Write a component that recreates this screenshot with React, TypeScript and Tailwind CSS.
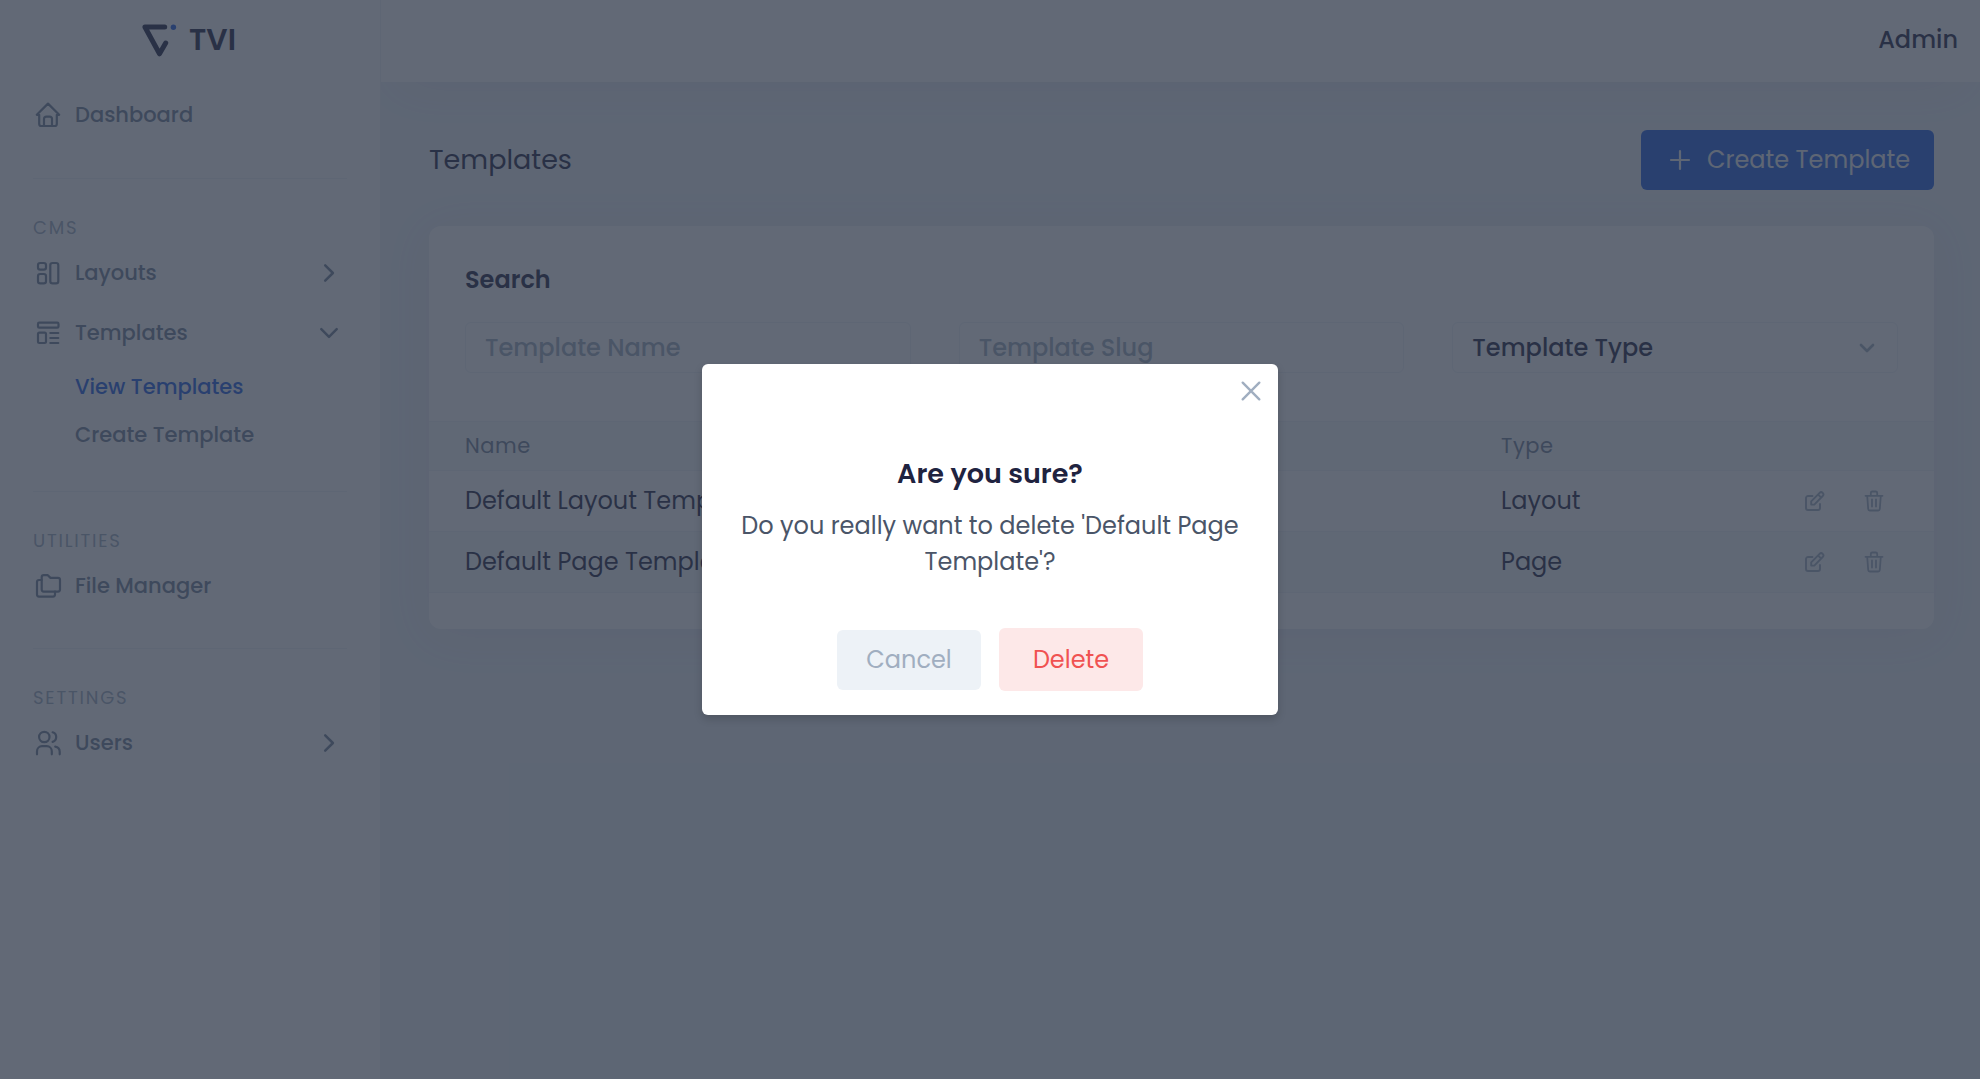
import type { ReactNode } from "react";

function NavIcon({ children }: { children: ReactNode }) {
  return (
    <svg
      viewBox="0 0 30 30"
      className="h-[30px] w-[30px] shrink-0"
      fill="none"
      stroke="currentColor"
      strokeWidth="2.2"
      strokeLinecap="round"
      strokeLinejoin="round"
    >
      {children}
    </svg>
  );
}

const HomeIcon = () => (
  <NavIcon>
    <path d="M6.2 14.8H3.8L15 3.6l11.2 11.2h-2.4M6.2 14.8V24a2 2 0 0 0 2 2h13.6a2 2 0 0 0 2-2V14.8" />
    <path d="M11 26v-7a2.4 2.4 0 0 1 2.4-2.4h3.2a2.4 2.4 0 0 1 2.4 2.4v7" />
  </NavIcon>
);

const LayoutsIcon = () => (
  <NavIcon>
    <rect x="5" y="5" width="8" height="6.6" rx="2.2" />
    <rect x="5" y="16" width="8" height="9.4" rx="2.2" />
    <rect x="17.3" y="5" width="8" height="20.4" rx="2.2" />
  </NavIcon>
);

const TemplatesIcon = () => (
  <NavIcon>
    <rect x="5" y="4.7" width="20.5" height="5" rx="1.2" />
    <rect x="5" y="14.7" width="8" height="10.3" rx="1.4" />
    <path d="M17.3 15h8M17.3 20h8M17.3 25h8" />
  </NavIcon>
);

const FoldersIcon = () => (
  <NavIcon>
    <path d="M8.7 6.2a2 2 0 0 1 2-2h4.1l2.7 2.7h7.5a2 2 0 0 1 2 2v9.7a2 2 0 0 1-2 2H10.7a2 2 0 0 1-2-2z" />
    <path d="M8.7 9H6a2 2 0 0 0-2 2v12.6a2 2 0 0 0 2 2h14a2 2 0 0 0 2-2v-3" />
  </NavIcon>
);

const UsersIcon = () => (
  <NavIcon>
    <circle cx="11.3" cy="9" r="5.2" />
    <path d="M4 26.3v-3.1a5 5 0 0 1 5-5h4.8a5 5 0 0 1 5 5v3.1M19.6 4.3a5 5 0 0 1 0 9.6M22.2 18.6a5.2 5.2 0 0 1 4.5 5.1v2.6" />
  </NavIcon>
);

const Chevron = ({ open }: { open?: boolean }) => (
  <svg
    viewBox="0 0 30 30"
    className="ml-auto h-[30px] w-[30px]"
    fill="none"
    stroke="currentColor"
    strokeWidth="2.5"
    strokeLinecap="round"
    strokeLinejoin="round"
  >
    <path d={open ? "M7.3 11.2L15 18.9l7.7-7.7" : "M11.2 7.3L18.9 15l-7.7 7.7"} />
  </svg>
);

const EditIcon = () => (
  <svg viewBox="0 0 20 20" className="h-[20px] w-[20px]" fill="none" stroke="currentColor" strokeWidth="1.9" strokeLinecap="round" strokeLinejoin="round">
    <path d="M7.5 5H3a2 2 0 0 0-2 2v10a2 2 0 0 0 2 2h10a2 2 0 0 0 2-2v-4" />
    <path d="M6.2 13.6v-3.3l8.4-8.4a2.15 2.15 0 0 1 3.1 3.1L9.3 13.6zM13.2 3.6l2.9 2.9" />
  </svg>
);

const TrashIcon = () => (
  <svg viewBox="0 0 20 22" className="h-[22px] w-[20px]" fill="none" stroke="currentColor" strokeWidth="1.8" strokeLinecap="round" strokeLinejoin="round">
    <path d="M1.5 5.8h17M3.2 5.8l1 13.2a1.6 1.6 0 0 0 1.6 1.5h8.4a1.6 1.6 0 0 0 1.6-1.5l1-13.2M6.8 5.5V3a1.5 1.5 0 0 1 1.5-1.5h3.4A1.5 1.5 0 0 1 13.2 3v2.5M8 9.5v7M12 9.5v7" />
  </svg>
);

function NavRow({ icon, label, chevron }: { icon: ReactNode; label: string; chevron?: ReactNode }) {
  return (
    <a className="flex h-[60px] items-center pl-[33px] pr-[36px] font-medium text-[#718096]">
      {icon}
      <span className="ml-3">{label}</span>
      {chevron}
    </a>
  );
}

function NavHeading({ children }: { children: ReactNode }) {
  return (
    <div className="mx-[33px] mt-8 h-[65px] border-t border-[#edf2f7] pt-[35px] text-[18px] leading-[27px] tracking-[1.8px] text-[#a0aec0]">
      {children}
    </div>
  );
}

function Sidebar() {
  return (
    <aside className="relative z-10 flex w-[381px] shrink-0 flex-col border-r border-[#edf2f7] bg-white text-[21px]">
      <div className="flex h-[79px] items-center pl-[140px]">
        <svg viewBox="0 0 40 36" className="h-[36px] w-[40px]" fill="none">
          <path d="M24.7 5H4.9L19.5 31.8l6.2-10.8" stroke="#1f2340" strokeWidth="5" strokeLinecap="round" strokeLinejoin="round" />
          <circle cx="33.4" cy="5.2" r="2.7" fill="#1c5ce4" />
        </svg>
        <span className="ml-[9px] text-[30px] font-semibold text-[#1f2340]">TVI</span>
      </div>
      <div className="mb-px mt-[6px]">
        <NavRow icon={<HomeIcon />} label="Dashboard" />
      </div>
      <NavHeading>CMS</NavHeading>
      <NavRow icon={<LayoutsIcon />} label="Layouts" chevron={<Chevron />} />
      <NavRow icon={<TemplatesIcon />} label="Templates" chevron={<Chevron open />} />
      <a className="flex h-[48px] items-center pl-[75px] font-medium text-[#1c5ce4]">View Templates</a>
      <a className="flex h-[48px] items-center pl-[75px] font-medium text-[#718096]">Create Template</a>
      <NavHeading>UTILITIES</NavHeading>
      <NavRow icon={<FoldersIcon />} label="File Manager" />
      <NavHeading>SETTINGS</NavHeading>
      <NavRow icon={<UsersIcon />} label="Users" chevron={<Chevron />} />
    </aside>
  );
}

const templates = [
  { name: "Default Layout Template", type: "Layout", row: "bg-white" },
  { name: "Default Page Template", type: "Page", row: "bg-[#f7fafc]" },
];

function TemplatesCard() {
  return (
    <section className="mt-9 h-[403px] rounded-xl bg-white shadow-[0_6px_48px_rgba(140,100,120,0.08)]">
      <h2 className="px-9 pt-9 text-[24px] font-semibold leading-[36px]">Search</h2>
      <div className="mt-6 grid grid-cols-3 gap-12 px-9 font-medium">
        <div className="flex h-[51px] items-center rounded-md border border-[#edf2f7] px-[19px] text-[#a0aec0]">Template Name</div>
        <div className="flex h-[51px] items-center rounded-md border border-[#edf2f7] px-[19px] text-[#a0aec0]">Template Slug</div>
        <div className="flex h-[51px] items-center justify-between rounded-md border border-[#edf2f7] pl-[19px] pr-[22px]">
          Template Type
          <svg viewBox="0 0 16 12" className="h-[12px] w-[16px] text-[#a0aec0]" fill="none" stroke="currentColor" strokeWidth="2.7" strokeLinecap="round" strokeLinejoin="round">
            <path d="M2 3l6 6 6-6" />
          </svg>
        </div>
      </div>
      <div className="mt-12 flex h-[50px] items-center border-y border-[#edf2f7] bg-[#f7fafc] px-9 text-[21px] tracking-[0.525px] text-[#718096]">
        <span className="w-[1036px]">Name</span>
        <span>Type</span>
      </div>
      {templates.map((t) => (
        <div key={t.name} className={`flex h-[61px] items-center border-b border-[#edf2f7] px-9 ${t.row}`}>
          <span className="w-[1036px]">{t.name}</span>
          <span>{t.type}</span>
          <span className="mb-px ml-auto mr-[14px] flex items-center gap-[39px] text-[#a0aec0]">
            <EditIcon />
            <TrashIcon />
          </span>
        </div>
      ))}
    </section>
  );
}

function DeleteDialog() {
  return (
    <div className="absolute inset-0 z-20 flex items-center justify-center bg-[#2d3748]/75">
      <div role="dialog" className="flex h-[351px] w-[576px] flex-col rounded-md bg-white shadow-[0_4px_8px_rgba(0,0,0,0.16)]">
        <div className="flex h-[54px] items-center justify-end pr-[17px] text-[#a0aec0]">
          <svg viewBox="0 0 20 20" className="h-[20px] w-[20px]" fill="none" stroke="currentColor" strokeWidth="2.4" strokeLinecap="round">
            <path d="M1.7 1.7l16.6 16.6M18.3 1.7L1.7 18.3" />
          </svg>
        </div>
        <div className="mt-9 px-6 text-center">
          <h3 className="text-[27px] font-semibold leading-[40px]">Are you sure?</h3>
          <p className="mt-[14px] leading-[36px] text-[#4a5568]">Do you really want to delete 'Default Page Template'?</p>
        </div>
        <div className="mt-12 flex items-center justify-center gap-[18px]">
          <button className="h-[60px] w-[144px] rounded-md bg-[#edf2f7] text-[#a0aec0]">Cancel</button>
          <button className="h-[63px] w-[144px] rounded-md bg-[#fde8e8] text-[#f05252]">Delete</button>
        </div>
      </div>
    </div>
  );
}

export default function App() {
  return (
    <div className="relative flex h-[1079px] w-[1980px] overflow-hidden bg-[#edf2f7] font-[Poppins,Inter,sans-serif] text-[24px] text-[#1f2340]">
      <Sidebar />
      <div className="flex grow flex-col">
        <header className="flex h-[82px] items-center justify-end bg-white pb-[2px] pr-[22px] font-medium shadow-[0_20px_48px_-20px_rgba(140,100,120,0.1)]">Admin</header>
        <main className="pl-12 pr-[46px] pt-12">
          <div className="flex h-[60px] items-center justify-between">
            <h1 className="text-[27px] font-normal">Templates</h1>
            <button className="flex h-[60px] w-[293px] items-center rounded-md bg-[#1c5ce4] pl-[28px] text-[#edf2f7]">
              <svg viewBox="0 0 22 22" className="h-[22px] w-[22px]" fill="none" stroke="currentColor" strokeWidth="2.2" strokeLinecap="round">
                <path d="M11 2v18M2 11h18" />
              </svg>
              <span className="ml-4">Create Template</span>
            </button>
          </div>
          <TemplatesCard />
        </main>
      </div>
      <DeleteDialog />
    </div>
  );
}
